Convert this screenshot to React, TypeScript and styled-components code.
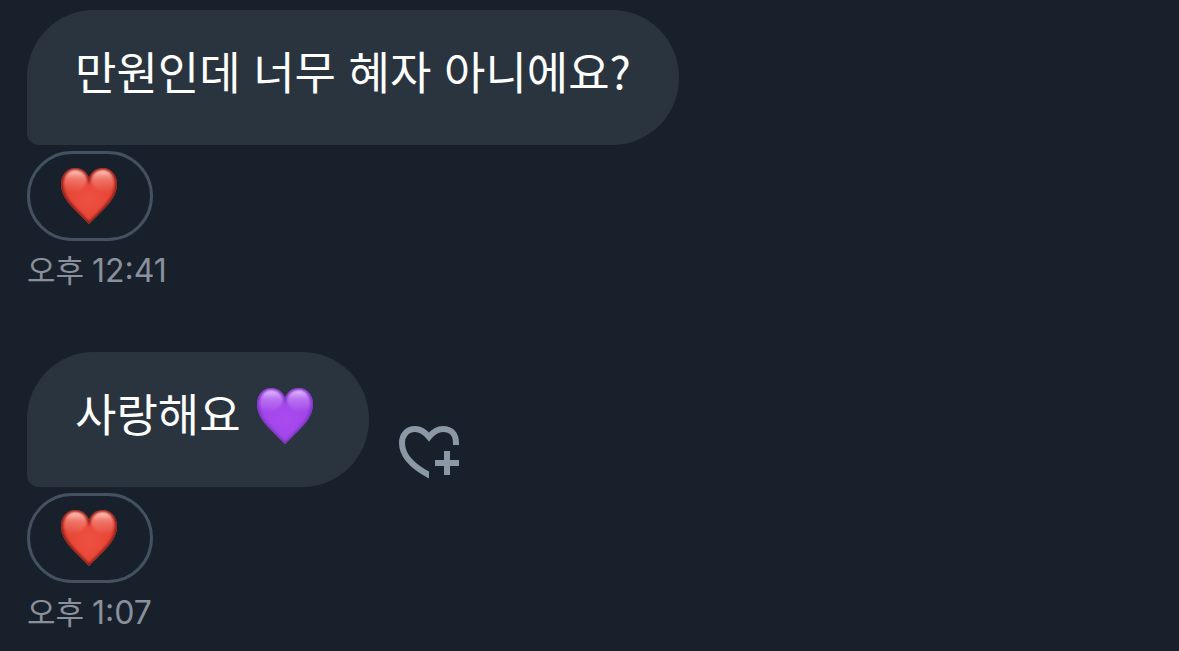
import React, { useId } from "react";
import styled, { createGlobalStyle } from "styled-components";

const GlobalStyle = createGlobalStyle`
  *, *::before, *::after { box-sizing: border-box; }
  body {
    margin: 0;
    min-height: 100vh;
    background: #18202b;
    font-family: "Noto Sans CJK KR", sans-serif;
  }
`;

const Conversation = styled.main`
  display: flex;
  flex-direction: column;
  gap: 60px;
  padding: 10px 27px 0;
`;

const Message = styled.article`
  display: flex;
  flex-direction: column;
  align-items: flex-start;
`;

const BubbleRow = styled.div`
  display: flex;
  align-items: flex-end;
  gap: 29px;
`;

const Bubble = styled.p`
  display: flex;
  align-items: center;
  gap: 15px;
  min-height: 135px;
  margin: 0;
  padding: 0 48px 13px;
  border-radius: 67px 67px 67px 12px;
  background: #29343f;
  color: #ffffff;
  font-size: 45px;
  line-height: 60px;
`;

const Emoji = styled.span`
  display: flex;
  padding: 6px 7px 0 0;
`;

const Reaction = styled.button`
  display: flex;
  align-items: center;
  justify-content: center;
  width: 126px;
  height: 90px;
  margin: 6px 0 0;
  padding: 0 3px 0 0;
  border: 3px solid #435160;
  border-radius: 45px;
  background: transparent;
`;

const AddReaction = styled.button`
  display: flex;
  margin: 0 0 7px;
  padding: 0;
  border: 0;
  background: transparent;
  color: #8b98a5;
`;

const Time = styled.time`
  display: flex;
  align-items: baseline;
  gap: 8px;
  margin-top: 7px;
  color: #8a919d;
  font-size: 31px;
  line-height: 42px;
`;

const Clock = styled.span`
  font-family: Inter, sans-serif;
  font-size: 32px;
`;

const palettes = {
  red: { label: "빨간 하트", edge: "#8f221b", base: "#e34030", glow: "#ee5142", shine: "#ffd0c8" },
  purple: { label: "보라색 하트", edge: "#8039c4", base: "#9f42e8", glow: "#a94bee", shine: "#e6c6ff" },
};

const heartPath =
  "M29 57C27 55 23 51 15 43C7 35 1 27 1 17C1 8 7 1 15 1C22 1 27 5 29 11C31 5 36 1 43 1C51 1 57 8 57 17C57 27 51 35 43 43C35 51 31 55 29 57Z";

function Heart({ tone }: { tone: keyof typeof palettes }) {
  const id = useId();
  const p = palettes[tone];
  return (
    <svg width="58" height="58" viewBox="0 0 58 58" role="img" aria-label={p.label}>
      <defs>
        <radialGradient id={`${id}b`} cx="0.5" cy="0.55" r="0.6">
          <stop offset="0" stopColor={p.glow} />
          <stop offset="1" stopColor={p.base} />
        </radialGradient>
        <linearGradient id={`${id}s`} x1="0" y1="0" x2="0" y2="1">
          <stop offset="0" stopColor={p.shine} stopOpacity="0.95" />
          <stop offset="0.4" stopColor={p.shine} stopOpacity="0.35" />
          <stop offset="1" stopColor={p.shine} stopOpacity="0" />
        </linearGradient>
        <filter id={`${id}f`} x="-20%" y="-20%" width="140%" height="140%">
          <feGaussianBlur stdDeviation="1.3" />
        </filter>
        <clipPath id={`${id}c`}>
          <path d={heartPath} />
        </clipPath>
      </defs>
      <path d={heartPath} fill={`url(#${id}b)`} />
      <g clipPath={`url(#${id}c)`}>
        <path d={heartPath} fill="none" stroke={p.edge} strokeWidth="4" filter={`url(#${id}f)`} />
        <g fill={`url(#${id}s)`} filter={`url(#${id}f)`}>
          <path d="M4 17C4 8 9 3 15 3C21 3 26 7 27 13C26 22 8 34 4 17Z" />
          <path d="M54 17C54 8 49 3 43 3C37 3 32 7 31 13C32 22 50 34 54 17Z" />
        </g>
      </g>
    </svg>
  );
}

function HeartPlus() {
  const id = useId();
  return (
    <svg width="62" height="56" viewBox="0 0 62 56" fill="none" stroke="currentColor" strokeWidth="6" aria-hidden="true">
      <clipPath id={id}>
        <path d="M0 0H62V21H31V56H0Z" />
      </clipPath>
      <path
        clipPath={`url(#${id})`}
        d="M58 23V19C58 10 53 5 45 5C39 5 35 8 31 13C27 8 23 5 17 5C9 5 4 11 4 19C4 32 14 42 31 51L37 54"
      />
      <path d="M49 27V51M37 39H61" />
    </svg>
  );
}

function HeartReaction() {
  return (
    <Reaction type="button">
      <Heart tone="red" />
    </Reaction>
  );
}

export default function App() {
  return (
    <>
      <GlobalStyle />
      <Conversation lang="ko">
        <Message>
          <BubbleRow>
            <Bubble>만원인데 너무 혜자 아니에요?</Bubble>
          </BubbleRow>
          <HeartReaction />
          <Time dateTime="12:41">
            <span>오후</span>
            <Clock>12:41</Clock>
          </Time>
        </Message>
        <Message>
          <BubbleRow>
            <Bubble>
              <span>사랑해요</span>
              <Emoji>
                <Heart tone="purple" />
              </Emoji>
            </Bubble>
            <AddReaction type="button" aria-label="반응 추가">
              <HeartPlus />
            </AddReaction>
          </BubbleRow>
          <HeartReaction />
          <Time dateTime="13:07">
            <span>오후</span>
            <Clock>1:07</Clock>
          </Time>
        </Message>
      </Conversation>
    </>
  );
}
